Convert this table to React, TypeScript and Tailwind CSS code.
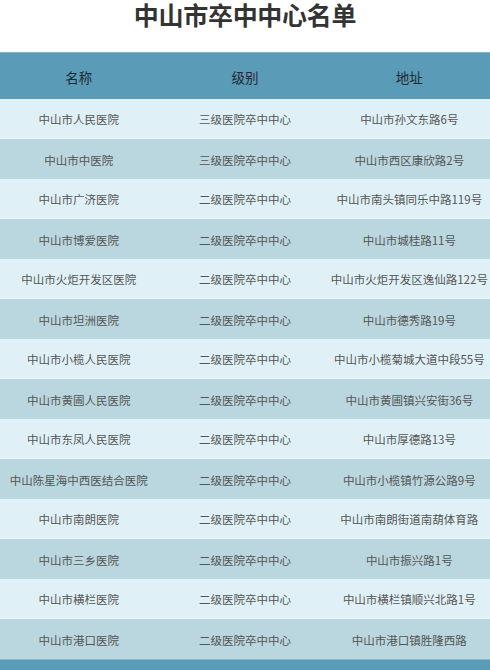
const rows: [string, string, string][] = [
  ['中山市人民医院', '三级医院卒中中心', '中山市孙文东路6号'],
  ['中山市中医院', '三级医院卒中中心', '中山市西区康欣路2号'],
  ['中山市广济医院', '二级医院卒中中心', '中山市南头镇同乐中路119号'],
  ['中山市博爱医院', '二级医院卒中中心', '中山市城桂路11号'],
  ['中山市火炬开发区医院', '二级医院卒中中心', '中山市火炬开发区逸仙路122号'],
  ['中山市坦洲医院', '二级医院卒中中心', '中山市德秀路19号'],
  ['中山市小榄人民医院', '二级医院卒中中心', '中山市小榄菊城大道中段55号'],
  ['中山市黄圃人民医院', '二级医院卒中中心', '中山市黄圃镇兴安街36号'],
  ['中山市东凤人民医院', '二级医院卒中中心', '中山市厚德路13号'],
  ['中山陈星海中西医结合医院', '二级医院卒中中心', '中山市小榄镇竹源公路9号'],
  ['中山市南朗医院', '二级医院卒中中心', '中山市南朗街道南葫体育路'],
  ['中山市三乡医院', '二级医院卒中中心', '中山市振兴路1号'],
  ['中山市横栏医院', '二级医院卒中中心', '中山市横栏镇顺兴北路1号'],
  ['中山市港口医院', '二级医院卒中中心', '中山市港口镇胜隆西路'],
];

const App = () => {
  return (
    <div className="w-[490px] h-[670px] overflow-hidden bg-white font-['Noto_Sans_CJK_SC','Noto_Sans',sans-serif]">
      {/* Title */}
      <div className="h-[52px] pt-[1px] flex justify-center">
        <h1 className="text-[25px] leading-[26px] font-bold text-[#333] tracking-[-0.3px]">
          中山市卒中中心名单
        </h1>
      </div>

      {/* Header */}
      <div className="grid grid-cols-3 h-[47px] pt-[2px] items-center bg-[#5a9bb8] border-t border-[#86b6c8] text-[13.5px] text-[#1f2a30]">
        <div className="text-center pr-[6px]">名称</div>
        <div className="text-center">级别</div>
        <div className="text-center pl-[2px]">地址</div>
      </div>

      {/* Rows */}
      <div>
        {rows.map((r, i) => (
          <div
            key={r[0]}
            className={`grid grid-cols-3 h-[40px] pt-[3px] items-center text-[11.5px] text-[#555] ${
              i % 2 === 0 ? 'bg-[#dff1f6] border-b border-[#e9f8fc]' : 'bg-[#bad6de]'
            }`}
          >
            <div className="text-center pr-[6px] whitespace-nowrap">{r[0]}</div>
            <div className="text-center whitespace-nowrap">{r[1]}</div>
            <div className="text-center whitespace-nowrap pl-[2px]">{r[2]}</div>
          </div>
        ))}
      </div>

      {/* Footer strip */}
      <div className="h-[20px] bg-[#5a9bb8] border-t border-[#86b6c8]" />
    </div>
  );
};

export default App;
